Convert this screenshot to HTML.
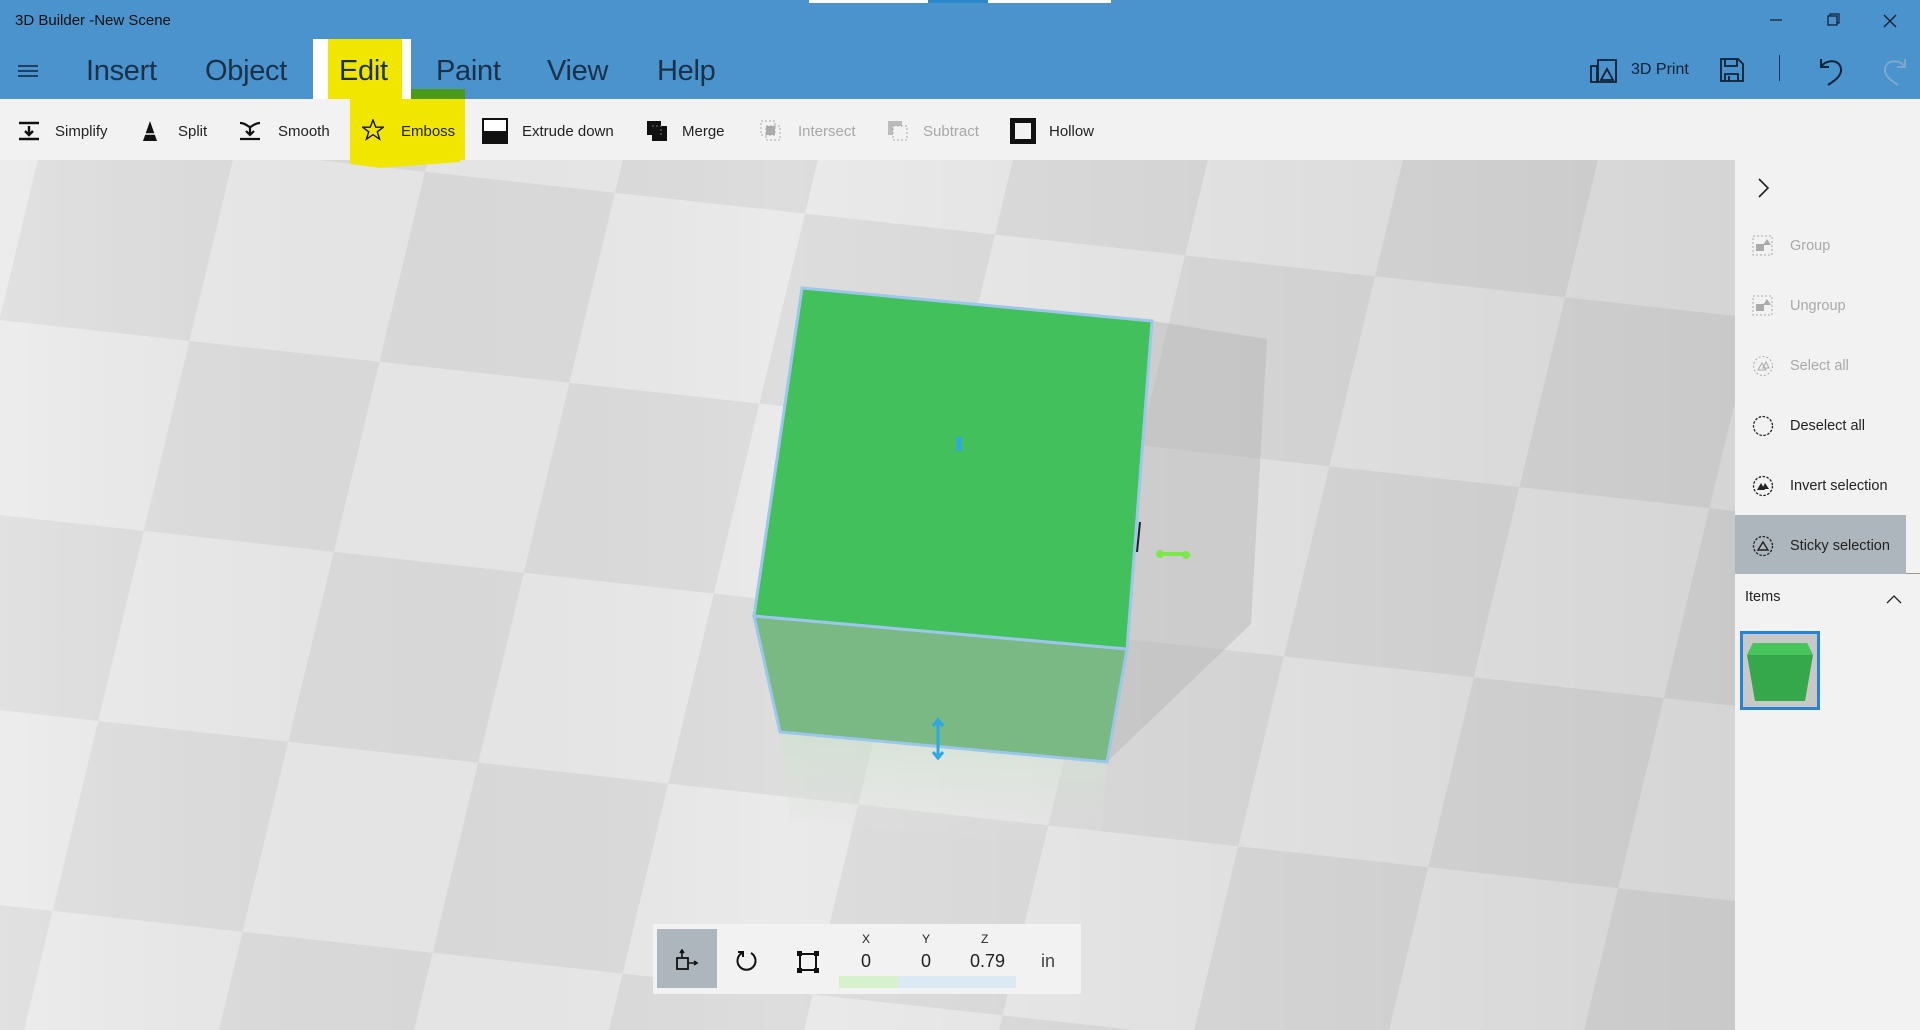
<!DOCTYPE html>
<html><head><meta charset="utf-8"><style>
*{margin:0;padding:0;box-sizing:border-box}
body{width:1920px;height:1030px;overflow:hidden;font-family:"Liberation Sans",sans-serif;background:#e6e6e6;position:relative}
.abs{position:absolute}
#top{left:0;top:0;width:1920px;height:99px;background:#4a93cd}
.tab{position:absolute;top:51px;font-size:29px;color:#1a3148;line-height:40px;letter-spacing:-0.3px}
#tb{left:0;top:99px;width:1920px;height:61px;background:#f2f2f2}
.ti{position:absolute;top:122px;font-size:15px;color:#222;line-height:20px}
.ti.dis{color:#a8a8a8}
.ic{position:absolute}
#panel{left:1735px;top:160px;width:185px;height:870px;background:#f2f2f2}
.pi{position:absolute;left:1790px;font-size:14.5px;color:#222;line-height:20px}
.pi.dis{color:#a9a9a9}
</style></head><body>
<svg class="abs" style="left:0;top:160px" width="1735" height="870">
<defs>
<pattern id="ck" width="380" height="380" patternUnits="userSpaceOnUse" patternTransform="matrix(1,0.11,-0.24,1,45,-30)">
<rect width="380" height="380" fill="#eaeaea"/>
<rect width="190" height="190" fill="#dddddd"/>
<rect x="190" y="190" width="190" height="190" fill="#dddddd"/>
</pattern>
<linearGradient id="sh" x1="0" x2="1" y1="0" y2="0">
<stop offset="0" stop-color="#fff" stop-opacity="0.12"/>
<stop offset="0.45" stop-color="#000" stop-opacity="0"/>
<stop offset="1" stop-color="#000" stop-opacity="0.09"/>
</linearGradient>
<linearGradient id="rf" x1="0" x2="0" y1="0" y2="1">
<stop offset="0" stop-color="#cfe3cf" stop-opacity="0.7"/>
<stop offset="1" stop-color="#e0e0e0" stop-opacity="0"/>
</linearGradient>
</defs>
<rect width="1735" height="870" fill="url(#ck)"/>
<rect width="1735" height="870" fill="url(#sh)"/>
<polygon points="1152,161 1267,179 1251,464 1107,602 1127,489" fill="#b8b8b8" opacity="0.5"/>
<polygon points="780,572 1107,602 1100,690 790,660" fill="url(#rf)"/>
<polygon points="754,456 1127,489 1107,602 780,572" fill="#7ab884" stroke="#9cc6ea" stroke-width="3"/>
<polygon points="802,128 1152,161 1127,489 754,456" fill="#42c05b" stroke="#9cc6ea" stroke-width="3"/>
<path d="M959,277 v14" stroke="#2aa8e8" stroke-width="5"/>
<path d="M938,563 v32 M933,566 l5,-6 5,6 M933,592 l5,6 5,-6" stroke="#2aa8e8" stroke-width="3" fill="none"/>
<path d="M1140,362 l-3,30" stroke="#222" stroke-width="2"/>
<path d="M1160,394 h26" stroke="#7ee84a" stroke-width="4"/>
<circle cx="1160" cy="394" r="4" fill="#7ee84a"/><circle cx="1186" cy="395" r="4" fill="#7ee84a"/>
</svg>

<div id="top" class="abs"></div>
<div class="abs" style="left:809px;top:0;width:302px;height:3px;background:#fff"></div>
<div class="abs" style="left:928px;top:0;width:60px;height:3px;background:#2b88c8"></div>
<div class="abs" style="left:15px;top:12px;font-size:15px;color:#111">3D Builder -New Scene</div>
<div class="abs" style="left:313px;top:39px;width:98px;height:60px;background:#fff"></div>
<div class="abs" style="left:328px;top:39px;width:74px;height:61px;background:#f0e600"></div>
<div class="abs" style="left:411px;top:89px;width:54px;height:11px;background:#4b9a1a"></div>
<svg class="abs" style="left:18px;top:64px" width="22" height="16"><path d="M0,2h20M0,7h20M0,12h20" stroke="#11263a" stroke-width="1.4"/></svg>
<div class="tab" style="left:86px">Insert</div>
<div class="tab" style="left:205px">Object</div>
<div class="tab" style="left:339px">Edit</div>
<div class="tab" style="left:436px">Paint</div>
<div class="tab" style="left:547px">View</div>
<div class="tab" style="left:657px">Help</div>
<svg class="abs" style="left:1770px;top:12px" width="140" height="18">
<path d="M0,8h12" stroke="#123" stroke-width="1.3"/>
<rect x="58" y="4" width="9" height="9" fill="none" stroke="#123" stroke-width="1.3"/><path d="M60,4v-2h9v9h-2" fill="none" stroke="#123" stroke-width="1.2"/>
<path d="M114,3l12,12M126,3l-12,12" stroke="#123" stroke-width="1.4"/>
</svg>
<svg class="abs" style="left:1590px;top:58px" width="30" height="26"><path d="M1,8h6v16h-6zM8,2h18v22h-18z" fill="none" stroke="#0f2133" stroke-width="1.8"/><path d="M11,22l6,-11 6,11z" fill="none" stroke="#0f2133" stroke-width="1.8"/></svg>
<div class="abs" style="left:1631px;top:61px;font-size:16px;color:#0f2133">3D Print</div>
<svg class="abs" style="left:1720px;top:58px" width="24" height="24"><path d="M1,1h17l5,5v17h-22z M5,1v7h12v-7 M5,23v-7h13v7 M9,18v5" fill="none" stroke="#0f2133" stroke-width="1.8"/></svg>
<div class="abs" style="left:1779px;top:55px;width:1px;height:26px;background:#1c3a56"></div>
<svg class="abs" style="left:1818px;top:56px" width="28" height="30"><path d="M3,3v8h8 M3,11 C8,3 22,3 23,13 C24,20 16,25 10,29" fill="none" stroke="#0f2133" stroke-width="2"/></svg>
<svg class="abs" style="left:1880px;top:56px" width="28" height="30"><path d="M25,3v8h-8 M25,11 C20,3 6,3 5,13 C4,20 12,25 18,29" fill="none" stroke="#7fa8cc" stroke-width="2"/></svg>

<div id="tb" class="abs"></div>
<div class="abs" style="left:350px;top:99px;width:115px;height:61px;background:#f0e600"></div>
<svg class="abs" style="left:350px;top:158px" width="110" height="12"><polygon points="0,0 110,0 110,4 30,10 0,6" fill="#f0e600"/></svg>
<svg class="ic" style="left:18px;top:121px" width="22" height="20"><path d="M1,2h20M1,18h20M11,5v9M7,10l4,4 4,-4" stroke="#111" stroke-width="2.4" fill="none"/></svg>
<div class="ti" style="left:55px">Simplify</div>
<svg class="ic" style="left:141px;top:120px" width="18" height="22"><path d="M9,1l7,20h-14z" fill="#111"/><path d="M2,14h14" stroke="#f2f2f2" stroke-width="1.5"/></svg>
<div class="ti" style="left:178px">Split</div>
<svg class="ic" style="left:239px;top:121px" width="22" height="20"><path d="M1,2c6,0 8,4 10,4s4,-4 10,-4M1,18h20M11,7v7M7,10l4,4 4,-4" stroke="#111" stroke-width="2.2" fill="none"/></svg>
<div class="ti" style="left:278px">Smooth</div>
<svg class="ic" style="left:362px;top:119px" width="22" height="22"><path d="M11,1l2.8,7.2h7.6l-6.1,4.6 2.3,7.4-6.6-4.5-6.6,4.5 2.3-7.4-6.1-4.6h7.6z" fill="none" stroke="#111" stroke-width="1.4"/></svg>
<div class="ti" style="left:401px">Emboss</div>
<svg class="ic" style="left:482px;top:118px" width="26" height="26"><rect x="1" y="1" width="24" height="24" fill="#fff" stroke="#111" stroke-width="2"/><rect x="1" y="13" width="24" height="12" fill="#111"/></svg>
<div class="ti" style="left:522px">Extrude down</div>
<svg class="ic" style="left:646px;top:120px" width="22" height="22"><rect x="1" y="1" width="14" height="14" fill="#111"/><rect x="6" y="6" width="15" height="15" fill="#111"/><path d="M6,6h9v9" stroke="#777" stroke-dasharray="2,2" fill="none"/></svg>
<div class="ti" style="left:682px">Merge</div>
<svg class="ic" style="left:760px;top:120px" width="22" height="22"><rect x="1" y="1" width="14" height="14" fill="none" stroke="#aaa" stroke-dasharray="2,2"/><rect x="6" y="6" width="14" height="14" fill="none" stroke="#aaa" stroke-dasharray="2,2"/><rect x="6" y="6" width="9" height="9" fill="#aaa"/></svg>
<div class="ti dis" style="left:798px">Intersect</div>
<svg class="ic" style="left:887px;top:120px" width="22" height="22"><rect x="1" y="1" width="14" height="14" fill="#bbb"/><rect x="6" y="6" width="14" height="14" fill="#f2f2f2" stroke="#aaa" stroke-dasharray="2,2"/></svg>
<div class="ti dis" style="left:923px">Subtract</div>
<svg class="ic" style="left:1010px;top:118px" width="26" height="26"><rect x="2.5" y="2.5" width="21" height="21" fill="none" stroke="#111" stroke-width="5"/></svg>
<div class="ti" style="left:1049px">Hollow</div>

<div id="panel" class="abs"></div>
<svg class="abs" style="left:1757px;top:177px" width="14" height="22"><path d="M2,2l9,9-9,9" fill="none" stroke="#222" stroke-width="1.6"/></svg>
<svg class="abs" style="left:1752px;top:235px" width="22" height="22"><rect x="1" y="1" width="19" height="19" fill="none" stroke="#aaa" stroke-dasharray="2,2"/><rect x="4" y="9" width="8" height="7" fill="#aaa"/><path d="M11,10l4,-6 4,6z" fill="#aaa"/></svg>
<div class="pi dis" style="top:236px">Group</div>
<svg class="abs" style="left:1752px;top:295px" width="22" height="22"><rect x="1" y="1" width="19" height="19" fill="none" stroke="#aaa" stroke-dasharray="2,2"/><rect x="4" y="9" width="8" height="7" fill="#aaa"/><path d="M11,10l4,-6 4,6z" fill="#aaa"/></svg>
<div class="pi dis" style="top:296px">Ungroup</div>
<svg class="abs" style="left:1752px;top:355px" width="22" height="22"><circle cx="11" cy="11" r="9.5" fill="none" stroke="#aaa" stroke-dasharray="2,2"/><path d="M6,15l4,-7 4,7z M11,13l3,-6 3,6z" fill="none" stroke="#aaa"/></svg>
<div class="pi dis" style="top:356px">Select all</div>
<svg class="abs" style="left:1752px;top:415px" width="22" height="22"><circle cx="11" cy="11" r="9.5" fill="none" stroke="#222" stroke-dasharray="2.5,1.5" stroke-width="1.3"/></svg>
<div class="pi" style="top:416px">Deselect all</div>
<svg class="abs" style="left:1752px;top:475px" width="22" height="22"><circle cx="11" cy="11" r="9.5" fill="none" stroke="#222" stroke-dasharray="2.5,1.5" stroke-width="1.3"/><path d="M5,15l4,-7 4,7z M10,14l3,-6 4,6z" fill="#222"/></svg>
<div class="pi" style="top:476px">Invert selection</div>
<div class="abs" style="left:1735px;top:515px;width:171px;height:59px;background:#aeb6bd"></div>
<div class="abs" style="left:1906px;top:573px;width:14px;height:1px;background:#999"></div>
<svg class="abs" style="left:1752px;top:535px" width="22" height="22"><circle cx="11" cy="11" r="9.5" fill="none" stroke="#222" stroke-dasharray="2.5,1.5" stroke-width="1.3"/><path d="M6,15l5,-8 5,8z" fill="none" stroke="#222" stroke-width="1.4"/></svg>
<div class="pi" style="top:536px">Sticky selection</div>
<div class="pi" style="left:1745px;top:587px">Items</div>
<svg class="abs" style="left:1885px;top:594px" width="18" height="12"><path d="M2,9l7,-7 7,7" fill="none" stroke="#222" stroke-width="1.3"/></svg>
<div class="abs" style="left:1740px;top:631px;width:80px;height:79px;border:3px solid #2a83d2;background:#c8c8c8"></div>
<svg class="abs" style="left:1747px;top:643px" width="66" height="62"><polygon points="6,0 60,0 66,12 58,58 8,58 0,12" fill="#34a84a"/><polygon points="6,0 60,0 66,12 0,12" fill="#48c45c"/></svg>

<div class="abs" style="left:653px;top:924px;width:428px;height:70px;background:#f2f2f2;border-radius:2px"></div>
<div class="abs" style="left:657px;top:929px;width:60px;height:59px;background:#aeb6bd"></div>
<svg class="abs" style="left:675px;top:949px" width="26" height="24"><rect x="2" y="9" width="11" height="11" fill="none" stroke="#111" stroke-width="1.8"/><path d="M7,8v-6M5,4l2,-3 2,3M14,14h7M19,12l3,2-3,2" stroke="#111" stroke-width="1.6" fill="none"/></svg>
<svg class="abs" style="left:736px;top:950px" width="24" height="24"><path d="M6,3 A9,9 0 1 0 15,3" fill="none" stroke="#111" stroke-width="2"/><path d="M2,2h5v5" fill="none" stroke="#111" stroke-width="2"/></svg>
<svg class="abs" style="left:796px;top:950px" width="24" height="24"><rect x="4" y="4" width="16" height="16" fill="none" stroke="#111" stroke-width="2"/><rect x="1" y="1" width="5" height="5" fill="#111"/><rect x="18" y="1" width="5" height="5" fill="#111"/><rect x="1" y="18" width="5" height="5" fill="#111"/><rect x="18" y="18" width="5" height="5" fill="#111"/></svg>
<div class="abs" style="left:839px;top:976px;width:59px;height:12px;background:#d6f2cc"></div>
<div class="abs" style="left:898px;top:976px;width:118px;height:12px;background:#dbe9f5"></div>
<div class="abs" style="left:862px;top:932px;font-size:12px;color:#222">X</div>
<div class="abs" style="left:922px;top:932px;font-size:12px;color:#222">Y</div>
<div class="abs" style="left:981px;top:932px;font-size:12px;color:#222">Z</div>
<div class="abs" style="left:861px;top:951px;font-size:18px;color:#222">0</div>
<div class="abs" style="left:921px;top:951px;font-size:18px;color:#222">0</div>
<div class="abs" style="left:970px;top:951px;font-size:18px;color:#222">0.79</div>
<div class="abs" style="left:1041px;top:951px;font-size:18px;color:#444">in</div>
</body></html>
